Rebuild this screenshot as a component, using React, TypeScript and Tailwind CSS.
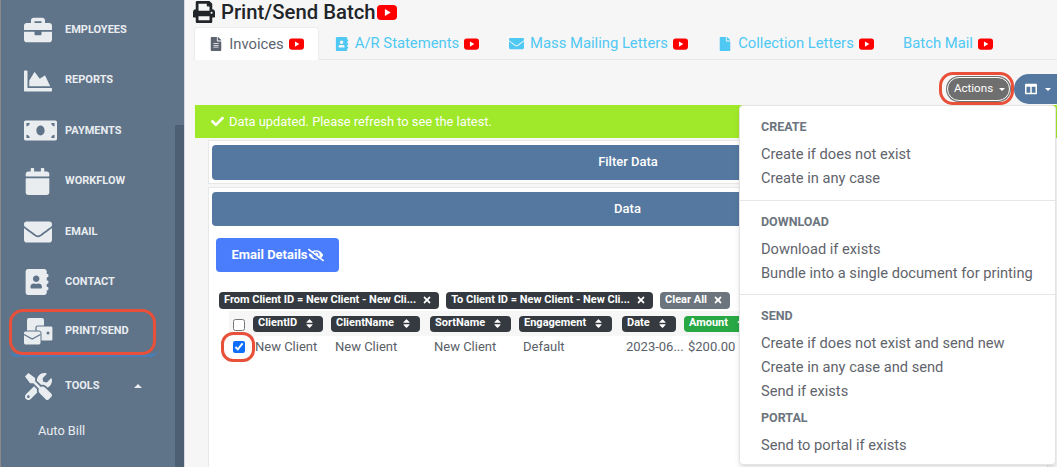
import { FaAddressBook, FaBriefcase, FaCalendar, FaChartArea, FaCheck, FaColumns, FaEnvelope, FaEyeSlash, FaFile, FaFileAlt, FaMoneyBill, FaPrint, FaSort, FaSortUp, FaTimes, FaTools } from "react-icons/fa";
import type { ReactNode } from "react";

const NAV = [
	{ label: "EMPLOYEES", icon: <FaBriefcase size={28} /> },
	{ label: "REPORTS", icon: <FaChartArea size={28} /> },
	{ label: "PAYMENTS", icon: <FaMoneyBill size={33} /> },
	{ label: "WORKFLOW", icon: <FaCalendar size={27} /> },
	{ label: "EMAIL", icon: <FaEnvelope size={28} /> },
	{ label: "CONTACT", icon: <FaAddressBook size={26} /> },
];

const MENU = [
	{ title: "CREATE", items: ["Create if does not exist", "Create in any case"], cls: "border-b border-[#e6e6e6] pb-[9px] mb-[13px]" },
	{ title: "DOWNLOAD", items: ["Download if exists", "Bundle into a single document for printing"], cls: "border-b border-[#e6e6e6] pb-[8px] mb-[13px]" },
	{ title: "SEND", items: ["Create if does not exist and send new", "Create in any case and send", "Send if exists"], cls: "mb-[6px]" },
	{ title: "PORTAL", items: ["Send to portal if exists"], cls: "" },
];

const COLS = [
	{ label: "ClientID", value: "New Client", w: "w-[78px]" },
	{ label: "ClientName", value: "New Client", w: "w-[99px]" },
	{ label: "SortName", value: "New Client", w: "w-[89px]" },
	{ label: "Engagement", value: "Default", w: "w-[103px]" },
	{ label: "Date", value: "2023-06...", w: "w-[62px]" },
];

function Yt({ big }: { big?: boolean }) {
	return (
		<svg viewBox="0 0 16 12" className={`${big ? "w-[22px] h-[15px]" : "w-[15px] h-[12px]"} inline-block shrink-0`}>
			<rect width="16" height="12" rx="3" fill="#ff0000" />
			<path d="M6.3 3.2 L11 6 L6.3 8.8 Z" fill="#fff" />
		</svg>
	);
}

function PrintSendIcon() {
	return (
		<svg viewBox="0 0 30 27" className="w-[30px] h-[27px]">
			<rect x="4" y="0" width="17" height="15" rx="2" fill="#e9edf0" />
			<rect x="13" y="8" width="17" height="15" rx="1.5" fill="#e9edf0" stroke="#5f7389" strokeWidth="1.2" />
			<circle cx="25" cy="15" r="1.5" fill="#5f7389" />
			<path d="M0.5 15 a2 2 0 0 1 2 -2 h13.5 a2 2 0 0 1 2 2 v10 a2 2 0 0 1 -2 2 h-13.5 a2 2 0 0 1 -2 -2 z" fill="#e9edf0" stroke="#5f7389" strokeWidth="1" />
			<path d="M1 16.5 L9.2 21 L17.5 16.5" fill="none" stroke="#5f7389" strokeWidth="1.2" />
		</svg>
	);
}

function Tab({ icon, label, active, w }: { icon?: ReactNode; label: string; active?: boolean; w: string }) {
	return (
		<div
			className={`${w} h-[33px] flex items-center justify-center gap-[5px] text-[14.8px] rounded-t ${
				active ? "bg-white text-[#5d6470] border-t border-x border-[#ececec]" : "text-[#4fc8f3]"
			}`}
		>
			{icon}
			<span className={icon ? "ml-[1px]" : ""}>{label}</span>
			<Yt />
		</div>
	);
}

function Chip({ label, gray }: { label: string; gray?: boolean }) {
	return (
		<div
			className={`h-[17px] flex items-center gap-[6px] rounded pl-[5px] pr-[7px] text-[11px] font-bold text-white ${
				gray ? "bg-[#6c757d]" : "bg-[#343a40]"
			}`}
		>
			<span>{label}</span>
			<FaTimes size={10} className="-translate-y-[1px]" />
		</div>
	);
}

export default function App() {
	return (
		<div className="w-[1057px] h-[467px] overflow-hidden flex bg-[#f6f6f6] font-['Roboto',sans-serif] relative">
			<aside className="w-[185px] shrink-0 h-full bg-[#5f7389] border-l border-[#8a8a8a] border-r-[1px] border-r-[#d5dae0] relative overflow-hidden">
				<div className="absolute right-0 top-[125px] bottom-0 w-[9px] bg-[#4d6073]" />
				<div className="pt-[5px]">
					{NAV.map((n) => (
						<div key={n.label} className="h-[50.4px] flex items-center text-[#e9edf0]">
							<div className="w-[64px] pl-[23px] shrink-0 flex items-center">{n.icon}</div>
							<span className="text-[11px] font-bold">{n.label}</span>
						</div>
					))}
					<div className="h-[50px] pt-[1px] ml-[9px] w-[147px] rounded-b-[6px] border-b-[3px] border-[#4a7db5] flex items-center text-[#e9edf0]">
						<div className="w-[55px] pl-[13px] shrink-0 flex items-center">
							<PrintSendIcon />
						</div>
						<span className="text-[11px] font-bold">PRINT/SEND</span>
					</div>
					<div className="h-[54px] mt-[2px] flex items-center text-[#e9edf0]">
						<div className="w-[64px] pl-[24px] shrink-0">
							<FaTools size={27} />
						</div>
						<span className="text-[11px] font-bold w-[69px]">TOOLS</span>
						<span className="w-0 h-0 border-x-[4px] border-x-transparent border-b-[4px] border-b-[#e9edf0]" />
					</div>
					<div className="h-[35px] pl-[37px] flex items-center text-[12.8px] text-[#e9edf0]">Auto Bill</div>
					<div className="h-[42px] mt-[2px] pl-[44px] flex items-center text-[13px] text-[#e9edf0]">Statements</div>
				</div>
			</aside>

			<main className="flex-1 min-w-0 pl-[8px]">
				<h1 className="h-[24px] mb-[3px] flex items-center text-[20.3px] font-medium text-[#212529] leading-none">
					<FaPrint size={22} className="mr-[6px]" />
					Print/Send Batch
					<Yt big />
				</h1>
				<div className="h-[33px] flex border-b border-[#e6e6e6] pl-[1px]">
					<Tab active w="w-[125px]" label="Invoices" icon={<FaFileAlt size={14} />} />
					<Tab w="w-[176px]" label="A/R Statements" icon={<FaAddressBook size={14} />} />
					<Tab w="w-[207px]" label="Mass Mailing Letters" icon={<FaEnvelope size={15} />} />
					<Tab w="w-[188px]" label="Collection Letters" icon={<FaFile size={14} />} />
					<Tab w="w-[116px]" label="Batch Mail" />
				</div>
				<div className="h-[45px] pt-[13px] flex justify-end items-center gap-[3px]">
					<button className="w-[65px] h-[26px] pl-[2px] rounded-full bg-[#6f6f6f] text-white text-[11.6px] flex items-center justify-center gap-[6px] outline outline-1 outline-white -outline-offset-2">
						Actions
						<span className="w-0 h-0 border-x-[3px] border-x-transparent border-t-[3px] border-t-white" />
					</button>
					<button className="w-[43px] h-[30px] rounded-l-full bg-[#54789f] text-white flex items-center pl-[11px] gap-[8px]">
						<FaColumns size={12} />
						<span className="w-0 h-0 border-x-[3px] border-x-transparent border-t-[3px] border-t-white" />
					</button>
				</div>
				<div className="h-[33px] ml-[2px] bg-[#a0e82a] flex items-center pl-[16px] gap-[5px] text-[12.85px] text-white">
					<FaCheck size={13} />
					Data updated. Please refresh to see the latest.
				</div>
				<div className="ml-[15px] mt-[2px] w-[840px] bg-white border border-[#e8e8e8] h-[44px] py-[4px] px-[3px]">
					<div className="h-[35px] rounded-sm bg-[#54789f] text-white text-[13px] font-medium flex items-center justify-center pb-[1px]">Filter Data</div>
				</div>
				<div className="ml-[15px] mt-[3px] w-[840px] bg-white border border-[#e8e8e8] h-[300px] py-[4px] px-[3px]">
					<div className="h-[34px] rounded-sm bg-[#54789f] text-white text-[13px] font-medium flex items-center justify-center pr-[1px]">Data</div>
					<button className="mt-[12px] ml-[4px] w-[123px] h-[34px] rounded-[4px] bg-[#4a7dfb] text-white text-[13px] font-bold flex items-center justify-center">
						Email Details
						<FaEyeSlash size={16} />
					</button>
					<div className="mt-[20px] ml-[7px] flex gap-[7px]">
						<Chip label="From Client ID = New Client - New Cli..." />
						<Chip label="To Client ID = New Client - New Cli..." />
						<Chip gray label="Clear All" />
					</div>
					<div className="mt-[2px] ml-[17px] flex items-center h-[25px] bg-[#f6f6f6] w-[520px]">
						<input type="checkbox" readOnly className="w-[12px] h-[12px] ml-[4px] mr-[8px] translate-y-[1px]" />
						{COLS.map((c) => (
							<div key={c.label} className={`${c.w} flex`}>
								<span className="inline-flex items-center gap-[7px] h-[16px] pl-[5px] pr-[8px] rounded bg-[#343a40] text-white text-[11px] font-bold">
									{c.label}
									<FaSort size={11} />
								</span>
							</div>
						))}
						<span className="inline-flex items-center gap-[7px] h-[16px] pl-[5px] pr-[3px] rounded bg-[#28a745] text-white text-[11px] font-bold">
							Amount
							<FaSortUp size={11} />
						</span>
					</div>
					<div className="ml-[17px] flex items-center h-[21px] text-[13px] text-[#5a6068]">
						<input type="checkbox" checked readOnly className="w-[12px] h-[12px] ml-[4px] mr-[8px] accent-[#0d6efd]" />
						{COLS.map((c, i) => (
							<div key={c.label} className={`${c.w} ${i === 0 ? "pl-[2px]" : "pl-[4px]"} whitespace-nowrap`}>
								{c.value}
							</div>
						))}
						<div className="pl-[4px]">$200.00</div>
					</div>
				</div>
			</main>

			{/* open Actions menu */}
			<div className="absolute left-[739px] top-[105px] w-[317px] h-[360px] bg-white border border-[#e3e3e3] rounded shadow-md text-[14.65px] text-[#5f646b] pt-[13px]">
				{MENU.map((m) => (
					<div key={m.title} className={m.cls}>
						<div className="pl-[21px] h-[16px] leading-[16px] text-[12.5px] font-bold text-[#6c757d] mb-[7px]">{m.title}</div>
						{m.items.map((i) => (
							<div key={i} className="pl-[21px] h-[24.4px] leading-[24.4px]">
								{i}
							</div>
						))}
					</div>
				))}
			</div>

			{/* annotation rings */}
			<div className="absolute left-[939px] top-[72px] w-[75px] h-[33px] rounded-[14px] border-[3px] border-[#e8503a]" />
			<div className="absolute left-[9px] top-[309px] w-[147px] h-[46px] rounded-[14px] border-[3px] border-[#e8503a]" />
			<div className="absolute left-[221px] top-[332px] w-[34px] h-[30px] rounded-[12px] border-[3px] border-[#e8503a]" />
		</div>
	);
}
